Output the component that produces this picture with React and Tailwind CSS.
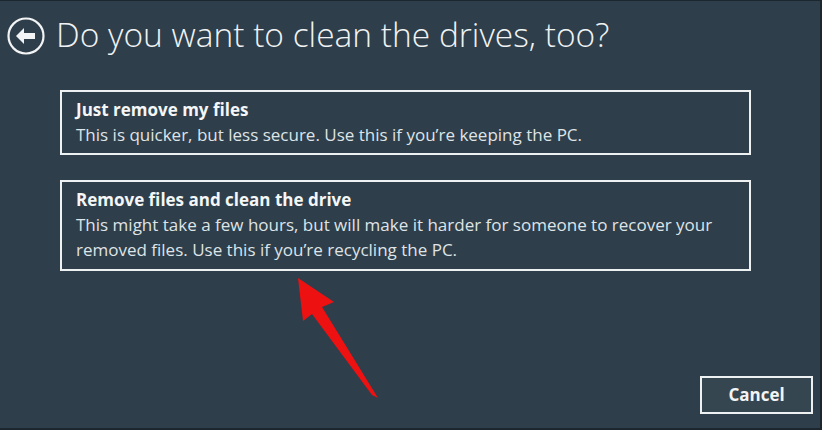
export default function App() {
  return (
    <div
      className="relative w-[822px] h-[430px] overflow-hidden bg-[#2e3e4a] border-t border-r-2 border-b-2 border-[#1c262e] text-white"
      style={{ fontFamily: '"Open Sans", "Noto Sans", sans-serif' }}
    >
      <div className="flex items-center gap-[11px] pl-[7px] pt-[16px]">
        <svg width="38" height="38" viewBox="0 0 38 38" className="shrink-0">
          <circle cx="19" cy="19" r="17.5" fill="none" stroke="#f2f4f5" strokeWidth="2.2" />
          <path d="M9 19 L17 11 L17 16 L28 16 L28 22 L17 22 L17 27 Z" fill="#f2f4f5" />
        </svg>
        <div className="text-[33.5px] font-light leading-[38px] -mt-[4px] text-[#f0f2f3]">
          Do you want to clean the drives, too?
        </div>
      </div>

      <div className="flex flex-col gap-[25px] ml-[60px] mt-[35px] w-[691px]">
        <div className="border-2 border-[#eef1f2] px-[14px] pt-[5px] pb-[6px]">
          <div className="text-[17px] font-bold leading-[25px] text-[#f4f6f7]">Just remove my files</div>
          <div className="text-[17px] leading-[25px] text-[#dfe4e7]">
            This is quicker, but less secure. Use this if you’re keeping the PC.
          </div>
        </div>
        <div className="border-2 border-[#eef1f2] px-[14px] pt-[5px] pb-[7px]">
          <div className="text-[17px] font-bold leading-[25px] text-[#f4f6f7]">Remove files and clean the drive</div>
          <div className="text-[17px] leading-[25px] text-[#dfe4e7]">
            This might take a few hours, but will make it harder for someone to recover your removed files. Use this if you’re recycling the PC.
          </div>
        </div>
      </div>

      <div className="absolute right-[7px] bottom-[14px]">
        <button className="w-[113px] h-[38px] border-2 border-[#eef1f2] bg-[#364650] text-[17px] font-bold text-[#f2f4f5]">
          Cancel
        </button>
      </div>

      <svg className="absolute left-0 top-0 pointer-events-none" width="822" height="430">
        <polygon
          points="298,277 334,301 322,306 378,397 372,394 312,313 303,320"
          fill="#ee1111"
        />
      </svg>
    </div>
  );
}
